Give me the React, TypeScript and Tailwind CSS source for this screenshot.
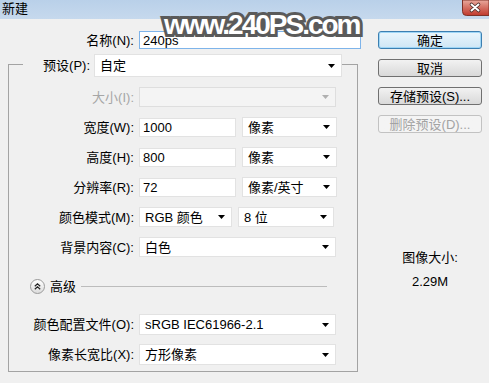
import React from "react";

const Arrow = (props: { disabled?: boolean }) => (
  <svg width="7" height="4" viewBox="0 0 7 4" className="shrink-0">
    <path d="M0 0h7L3.5 4z" fill={props.disabled ? "#b0b0b0" : "#000"} />
  </svg>
);

const CloseButton = () => (
  <svg width="27" height="16" viewBox="0 0 27 16" className="shrink-0 block">
    <defs>
      <linearGradient id="closeGrad" x1="0" y1="0" x2="0" y2="1">
        <stop offset="0" stopColor="#e9a99d" />
        <stop offset="0.5" stopColor="#d46f62" />
        <stop offset="1" stopColor="#c0392d" />
      </linearGradient>
    </defs>
    <path d="M0.5 0V11.5Q0.5 15.5 4.5 15.5H27V0Z" fill="url(#closeGrad)" stroke="#7e3329" strokeWidth="1" />
    <path d="M9.5 4.5l7 6M16.5 4.5l-7 6" stroke="#4a2a26" strokeWidth="3.6" strokeLinecap="round" />
    <path d="M9.5 4.5l7 6M16.5 4.5l-7 6" stroke="#fff" strokeWidth="2" strokeLinecap="round" />
  </svg>
);

const Field = (props: { value: string; w: string; h?: string; focus?: boolean }) => (
  <div
    className={`${props.w} ${props.h ?? "h-[19px]"} bg-white border ${
      props.focus ? "border-[#7eb4ea]" : "border-[#e2e2e2]"
    } flex items-center pl-[3px] text-[13px] leading-none`}
  >
    {props.value}
  </div>
);

const Select = (props: { value?: string; w: string; h?: string; disabled?: boolean }) => (
  <div
    className={`${props.w} ${props.h ?? "h-[20px]"} border flex items-center justify-between pl-[5px] pr-[6px] text-[13px] leading-none ${
      props.disabled ? "bg-[#f4f4f4] border-[#dedede]" : "bg-white border-[#e2e2e2]"
    }`}
  >
    <span>{props.value}</span>
    <Arrow disabled={props.disabled} />
  </div>
);

const Row = (props: { label: string; disabled?: boolean; children: React.ReactNode }) => (
  <div className="flex items-center">
    <div
      className={`w-[125px] text-right text-[13px] leading-none ${
        props.disabled ? "text-[#a6a6a6]" : "text-black"
      }`}
    >
      {props.label}
    </div>
    <div className="ml-[5px] flex items-center gap-[6px]">{props.children}</div>
  </div>
);

const Button = (props: { label: string; primary?: boolean; disabled?: boolean }) => (
  <div
    className={`h-[18px] w-[104px] rounded-[3px] border flex items-center justify-center text-[13px] leading-none bg-linear-to-b ${
      props.disabled
        ? "border-[#c2c2c2] from-[#f4f4f4] to-[#f4f4f4] text-[#a3a3a3]"
        : props.primary
        ? "border-[#3c7fb1] from-[#eaf6fd] to-[#cfe6f5] shadow-[inset_0_0_0_1px_#9fd6f6] text-black"
        : "border-[#707070] from-[#f2f2f2] to-[#d9d9d9] text-black"
    }`}
  >
    {props.label}
  </div>
);

export default function App() {
  return (
    <div className="relative w-[489px] h-[383px] overflow-hidden bg-[#f0f0f0] font-['Liberation_Sans','Noto_Sans_CJK_SC',sans-serif] text-black">
      {/* title bar */}
      <div className="h-[19px] flex items-start justify-between bg-[#bfd4eb] bg-linear-to-b from-[#b9d0e9] to-[#c6d9ed]">
        <span className="pl-[2px] pt-[1px] text-[13px] leading-[16px]">新建</span>
        <CloseButton />
      </div>

      <div className="flex">
        {/* form */}
        <div className="w-[370px]">
          <div className="flex items-center mt-[12px]">
            <div className="w-[134px] text-right text-[13px] leading-none">名称(N):</div>
            <div className="ml-[5px]">
              <Field value="240ps" w="w-[222px]" h="h-[18px]" focus />
            </div>
          </div>

          <div className="ml-[8px] w-[350px] mt-[5px]">
            <div className="flex h-[23px]">
              <div className="w-[15px] mt-[10px] border-t border-l border-[#a3a3a3]" />
              <div className="w-[67px] self-center text-right text-[13px] leading-none">预设(P):</div>
              <div className="ml-[4px]">
                <Select value="自定" w="w-[248px]" h="h-[23px]" />
              </div>
              <div className="flex-1 mt-[10px] border-t border-r border-[#a3a3a3]" />
            </div>

            <div className="border-x border-b border-[#a3a3a3] pt-[10px] pb-[6px]">
              <div className="flex flex-col gap-[10px]">
                <Row label="大小(I):" disabled>
                  <Select w="w-[197px]" disabled />
                </Row>
                <Row label="宽度(W):">
                  <Field value="1000" w="w-[97px]" />
                  <Select value="像素" w="w-[95px]" />
                </Row>
                <Row label="高度(H):">
                  <Field value="800" w="w-[97px]" />
                  <Select value="像素" w="w-[95px]" />
                </Row>
                <Row label="分辨率(R):">
                  <Field value="72" w="w-[97px]" />
                  <Select value="像素/英寸" w="w-[95px]" />
                </Row>
                <Row label="颜色模式(M):">
                  <Select value="RGB 颜色" w="w-[93px]" />
                  <Select value="8 位" w="w-[96px]" />
                </Row>
                <Row label="背景内容(C):">
                  <Select value="白色" w="w-[197px]" />
                </Row>
              </div>

              <div className="flex items-center mt-[22px] h-[14px]">
                <div className="ml-[21px] w-[15px] h-[15px] rounded-full border border-[#9a9a9a] bg-linear-to-b from-[#ffffff] to-[#dcdcdc] flex items-center justify-center">
                  <svg width="7" height="7" viewBox="0 0 7 7">
                    <path d="M0.8 3.2L3.5 0.8L6.2 3.2M0.8 6.2L3.5 3.8L6.2 6.2" fill="none" stroke="#222" strokeWidth="1.2" />
                  </svg>
                </div>
                <span className="ml-[5px] text-[13px] leading-none">高级</span>
                <div className="flex-1 ml-[5px] mr-[30px] h-px bg-[#bcbcbc]" />
              </div>

              <div className="flex flex-col gap-[9px] mt-[21px]">
                <Row label="颜色配置文件(O):">
                  <Select value="sRGB IEC61966-2.1" w="w-[197px]" h="h-[21px]" />
                </Row>
                <Row label="像素长宽比(X):">
                  <Select value="方形像素" w="w-[197px]" h="h-[21px]" />
                </Row>
              </div>
            </div>
          </div>
        </div>

        {/* buttons */}
        <div className="ml-[8px] w-[104px] pt-[12px] flex flex-col">
          <div className="flex flex-col gap-[10px]">
            <Button label="确定" primary />
            <Button label="取消" />
            <Button label="存储预设(S)..." />
            <Button label="删除预设(D)..." disabled />
          </div>
          <div className="mt-[113px] text-center text-[13px] leading-[24px]">
            <div>图像大小:</div>
            <div>2.29M</div>
          </div>
        </div>
      </div>

      {/* watermark */}
      <div className="absolute left-[164px] top-[11px] text-[28px] font-bold leading-none tracking-[-2px] text-white [-webkit-text-stroke:6px_#5a5a5a] [paint-order:stroke_fill]">
        www.240PS.com
      </div>
    </div>
  );
}
